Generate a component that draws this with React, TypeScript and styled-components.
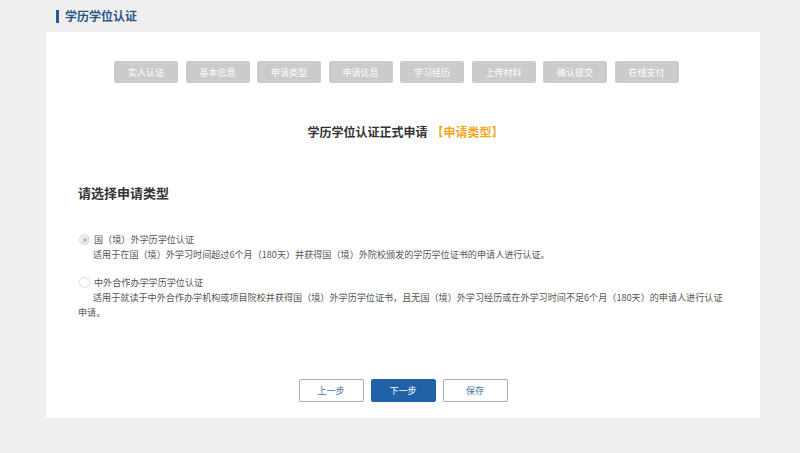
import styled, { createGlobalStyle } from "styled-components";

const GlobalStyle = createGlobalStyle`
  html, body {
    margin: 0;
    padding: 0;
    background: #efefef;
    font-family: "Noto Sans CJK SC", "Noto Sans", sans-serif;
  }
`;

const Page = styled.div`
  width: 800px;
  height: 453px;
  overflow: hidden;
  background: #efefef;
`;

const Header = styled.div`
  height: 32px;
  display: flex;
  align-items: center;
  padding-left: 56px;
  gap: 6px;
`;

const HeaderBar = styled.span`
  width: 3px;
  height: 13px;
  background: #1f5c99;
`;

const HeaderTitle = styled.h1`
  margin: 0;
  font-size: 12px;
  font-weight: 700;
  color: #2a5586;
  line-height: 14px;
`;

const Card = styled.div`
  margin-left: 46px;
  width: 714px;
  height: 386px;
  box-sizing: border-box;
  padding: 0 20px 0 32px;
  background: #fff;
  display: flex;
  flex-direction: column;
`;

const Steps = styled.div`
  display: flex;
  gap: 7.5px;
  margin: 29px 0 0 36px;
`;

const Step = styled.div`
  width: 64px;
  height: 22px;
  border-radius: 2px;
  background: #cbcbcb;
  color: #fff;
  font-size: 9px;
  display: flex;
  align-items: center;
  justify-content: center;
`;

const FormTitle = styled.h2`
  margin: 41px 0 0 -7px;
  text-align: center;
  font-size: 12px;
  line-height: 16px;
  font-weight: 700;
  color: #333;
`;

const Accent = styled.span`
  color: #f5a623;
  margin-left: 4px;
`;

const SectionTitle = styled.h3`
  margin: 44px 0 0;
  font-size: 13px;
  line-height: 18px;
  font-weight: 700;
  color: #333;
`;

const Options = styled.div`
  margin-top: 30px;
  display: flex;
  flex-direction: column;
  gap: 13px;
`;

const Option = styled.label`
  display: block;
  color: #555;
  font-size: 9.1px;
  line-height: 15px;
`;

const OptionHead = styled.span`
  display: flex;
  align-items: center;
  gap: 4px;
  padding-left: 1px;
`;

const Radio = styled.input.attrs({ type: "radio" })`
  appearance: none;
  margin: 0;
  width: 11px;
  height: 11px;
  border-radius: 50%;
  border: 1px solid #dcdcdc;
  box-sizing: border-box;
  background: #fff;
  position: relative;

  &:checked {
    background: #ececec;
  }
  &:checked::after {
    content: "";
    position: absolute;
    left: 2.5px;
    top: 2.5px;
    width: 4px;
    height: 4px;
    border-radius: 50%;
    background: #bdbdbd;
  }
`;

const Desc = styled.p`
  margin: 0;
  text-indent: 15px;
`;

const Actions = styled.div`
  margin: auto 4px 16px -8px;
  display: flex;
  justify-content: center;
  gap: 7px;
`;

const Button = styled.button<{ $primary?: boolean }>`
  width: 65px;
  height: 23px;
  border-radius: 2px;
  font-family: inherit;
  font-size: 9px;
  cursor: pointer;
  border: 1px solid ${(p) => (p.$primary ? "#1f62a8" : "#9fb0c3")};
  background: ${(p) => (p.$primary ? "#1f62a8" : "#fff")};
  color: ${(p) => (p.$primary ? "#fff" : "#4a73a0")};
`;

const steps = ["实人认证", "基本信息", "申请类型", "申请信息", "学习经历", "上传材料", "确认提交", "在线支付"];

export default function App() {
  return (
    <Page>
      <GlobalStyle />
      <Header>
        <HeaderBar />
        <HeaderTitle>学历学位认证</HeaderTitle>
      </Header>
      <Card>
        <Steps>
          {steps.map((s) => (
            <Step key={s}>{s}</Step>
          ))}
        </Steps>
        <FormTitle>
          学历学位认证正式申请<Accent>【申请类型】</Accent>
        </FormTitle>
        <SectionTitle>请选择申请类型</SectionTitle>
        <Options>
          <Option>
            <OptionHead>
              <Radio name="type" defaultChecked />
              国（境）外学历学位认证
            </OptionHead>
            <Desc>适用于在国（境）外学习时间超过6个月（180天）并获得国（境）外院校颁发的学历学位证书的申请人进行认证。</Desc>
          </Option>
          <Option>
            <OptionHead>
              <Radio name="type" />
              中外合作办学学历学位认证
            </OptionHead>
            <Desc>
              适用于就读于中外合作办学机构或项目院校并获得国（境）外学历学位证书，且无国（境）外学习经历或在外学习时间不足6个月（180天）的申请人进行认证
              <br />
              申请。
            </Desc>
          </Option>
        </Options>
        <Actions>
          <Button>上一步</Button>
          <Button $primary>下一步</Button>
          <Button>保存</Button>
        </Actions>
      </Card>
    </Page>
  );
}
